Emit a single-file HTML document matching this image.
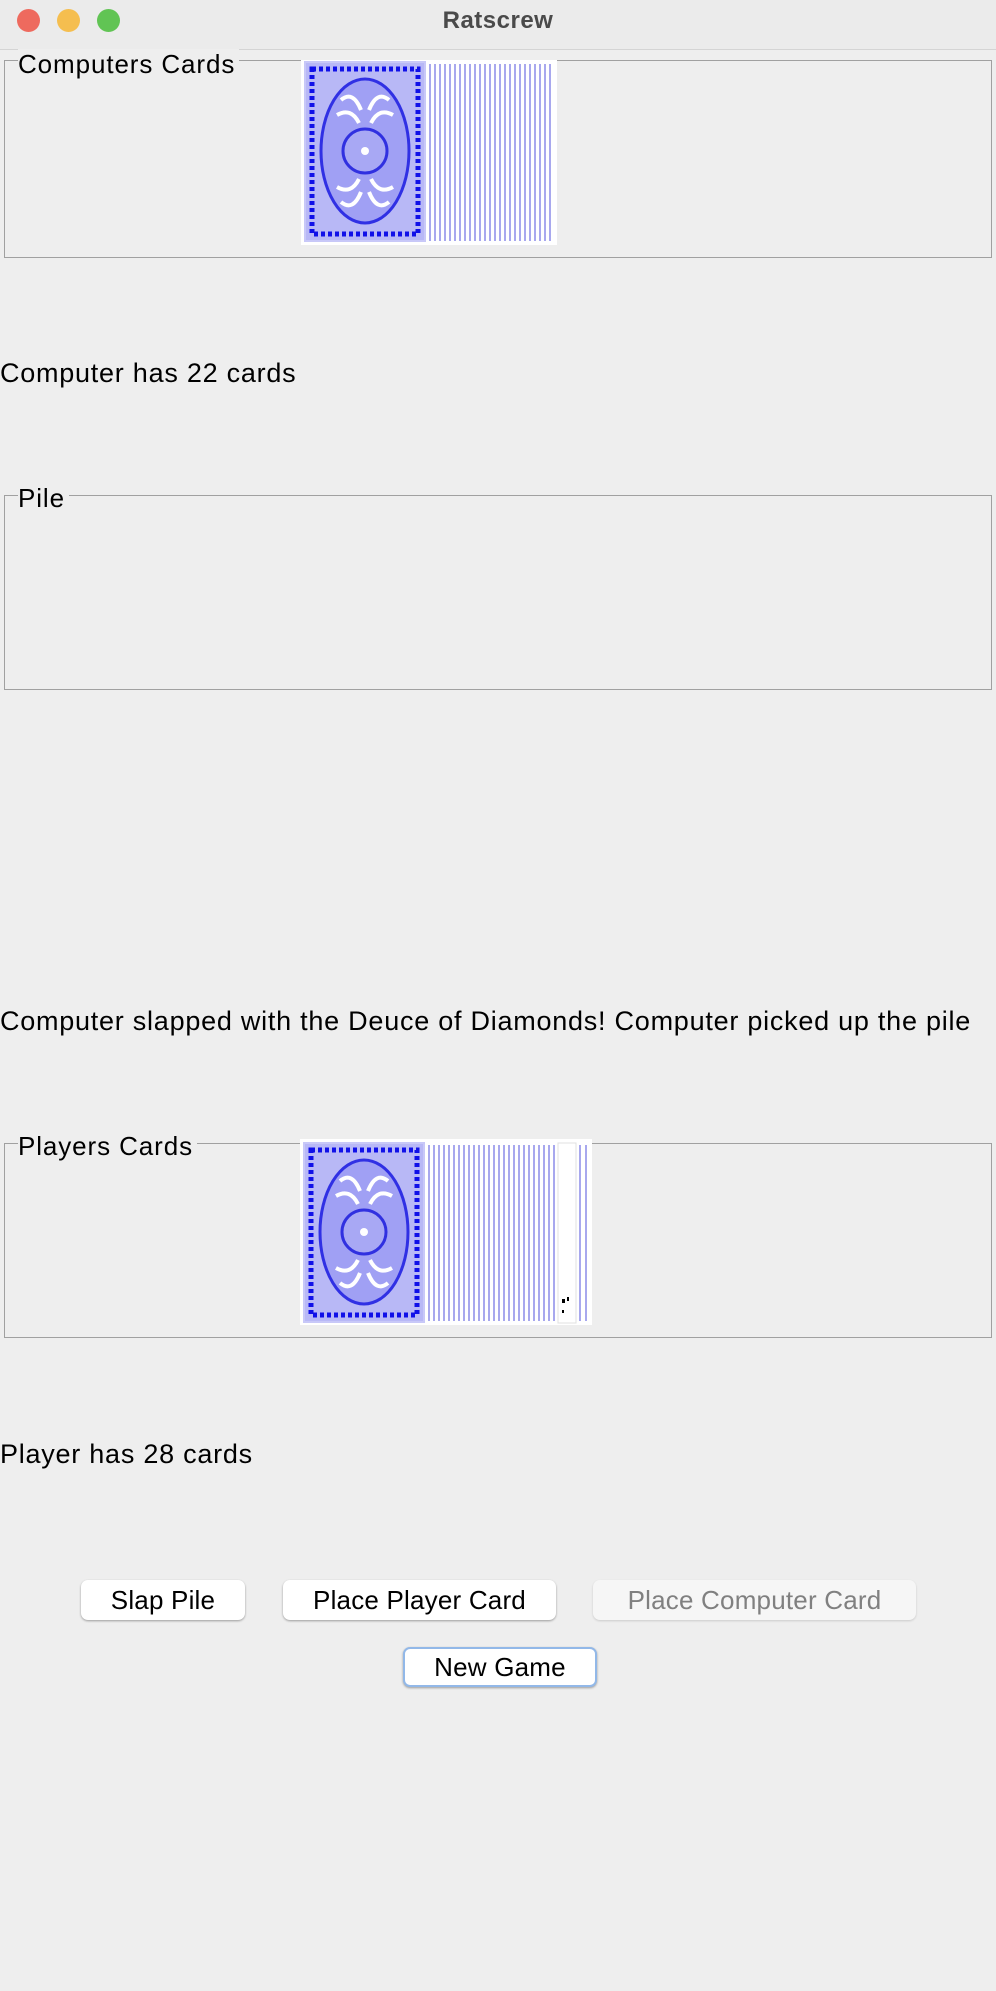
<!DOCTYPE html>
<html><head><meta charset="utf-8"><style>
*{margin:0;padding:0;box-sizing:border-box}
body{width:996px;height:1991px;background:#eeeeee;font-family:"Liberation Sans",sans-serif;position:relative;overflow:hidden;color:#000}
.tb{position:absolute;left:0;top:0;width:996px;height:50px;background:#ebebeb;border-bottom:1px solid #d4d4d4}
.dot{position:absolute;top:9px;width:23px;height:23px;border-radius:50%}
.title{position:absolute;top:7px;width:996px;text-align:center;font-weight:bold;font-size:24px;color:#4a4a4a;letter-spacing:0.5px}
.box{position:absolute;left:4px;width:988px;border:1.5px solid #a0a0a0}
.lbl{position:absolute;left:18px;font-size:26px;background:#eeeeee;padding:0 4px 0 0;line-height:30px;letter-spacing:0.9px}
.t{position:absolute;left:0;font-size:27px;line-height:30px;white-space:nowrap;letter-spacing:0.75px}
.btn{position:absolute;height:40px;background:#fff;border-radius:7px;box-shadow:0 1px 2px rgba(0,0,0,.35);font-size:26px;text-align:center;line-height:40px;letter-spacing:0.2px}
</style></head><body>
<div class="tb">
<div class="dot" style="left:17px;background:#ee6a5e"></div>
<div class="dot" style="left:57px;background:#f5be4f"></div>
<div class="dot" style="left:97px;background:#61c454"></div>
<div class="title">Ratscrew</div>
</div>

<div class="box" style="top:60px;height:198px"></div>
<div class="lbl" style="top:49px">Computers Cards</div>
<svg style="position:absolute;left:301px;top:60px" width="256" height="185">
<rect width="256" height="185" fill="#fff"/>
<g id="cb">
<rect x="4" y="2" width="120" height="179" fill="#b8b8f6" stroke="#c8c8f8" stroke-width="2"/>
<rect x="11" y="9" width="106" height="165" fill="none" stroke="#1010e8" stroke-width="5" stroke-dasharray="4 3"/>
<ellipse cx="64" cy="91" rx="44" ry="72" fill="#a0a0f4" stroke="#3030e4" stroke-width="3"/>
<circle cx="64" cy="91" r="22" fill="#a8a8f4" stroke="#3030e0" stroke-width="3"/>
<circle cx="64" cy="91" r="4" fill="#fff"/>
<path d="M40 40 q12 -10 20 10 M88 40 q-12 -10 -20 10 M40 142 q12 10 20 -10 M88 142 q-12 10 -20 -10 M36 55 q14 -8 22 8 M92 55 q-14 -8 -22 8 M36 127 q14 8 22 -8 M92 127 q-14 8 -22 -8" stroke="#fff" stroke-width="4" fill="none"/>
</g>
<g stroke="#a8a8ee" stroke-width="2">
<line x1="129" y1="4" x2="129" y2="181"/><line x1="134" y1="4" x2="134" y2="181"/><line x1="139" y1="4" x2="139" y2="181"/><line x1="144" y1="4" x2="144" y2="181"/><line x1="149" y1="4" x2="149" y2="181"/><line x1="154" y1="4" x2="154" y2="181"/><line x1="159" y1="4" x2="159" y2="181"/><line x1="164" y1="4" x2="164" y2="181"/><line x1="169" y1="4" x2="169" y2="181"/><line x1="174" y1="4" x2="174" y2="181"/><line x1="179" y1="4" x2="179" y2="181"/><line x1="184" y1="4" x2="184" y2="181"/><line x1="189" y1="4" x2="189" y2="181"/><line x1="194" y1="4" x2="194" y2="181"/><line x1="199" y1="4" x2="199" y2="181"/><line x1="204" y1="4" x2="204" y2="181"/><line x1="209" y1="4" x2="209" y2="181"/><line x1="214" y1="4" x2="214" y2="181"/><line x1="219" y1="4" x2="219" y2="181"/><line x1="224" y1="4" x2="224" y2="181"/><line x1="229" y1="4" x2="229" y2="181"/><line x1="234" y1="4" x2="234" y2="181"/><line x1="239" y1="4" x2="239" y2="181"/><line x1="244" y1="4" x2="244" y2="181"/><line x1="249" y1="4" x2="249" y2="181"/>
</g>
</svg>

<div class="t" style="top:358px">Computer has 22 cards</div>

<div class="box" style="top:495px;height:195px"></div>
<div class="lbl" style="top:483px">Pile</div>

<div class="t" style="top:1006px">Computer slapped with the Deuce of Diamonds! Computer picked up the pile</div>

<div class="box" style="top:1143px;height:195px"></div>
<div class="lbl" style="top:1131px">Players Cards</div>
<svg style="position:absolute;left:300px;top:1139px" width="292" height="186">
<rect width="292" height="186" fill="#fff"/>
<use href="#cb" x="0" y="2"/>
<g stroke="#a8a8ee" stroke-width="2">
<line x1="129" y1="6" x2="129" y2="182"/><line x1="134" y1="6" x2="134" y2="182"/><line x1="139" y1="6" x2="139" y2="182"/><line x1="144" y1="6" x2="144" y2="182"/><line x1="149" y1="6" x2="149" y2="182"/><line x1="154" y1="6" x2="154" y2="182"/><line x1="159" y1="6" x2="159" y2="182"/><line x1="164" y1="6" x2="164" y2="182"/><line x1="169" y1="6" x2="169" y2="182"/><line x1="174" y1="6" x2="174" y2="182"/><line x1="179" y1="6" x2="179" y2="182"/><line x1="184" y1="6" x2="184" y2="182"/><line x1="189" y1="6" x2="189" y2="182"/><line x1="194" y1="6" x2="194" y2="182"/><line x1="199" y1="6" x2="199" y2="182"/><line x1="204" y1="6" x2="204" y2="182"/><line x1="209" y1="6" x2="209" y2="182"/><line x1="214" y1="6" x2="214" y2="182"/><line x1="219" y1="6" x2="219" y2="182"/><line x1="224" y1="6" x2="224" y2="182"/><line x1="229" y1="6" x2="229" y2="182"/><line x1="234" y1="6" x2="234" y2="182"/><line x1="239" y1="6" x2="239" y2="182"/><line x1="244" y1="6" x2="244" y2="182"/><line x1="249" y1="6" x2="249" y2="182"/><line x1="254" y1="6" x2="254" y2="182"/><line x1="280" y1="6" x2="280" y2="182"/><line x1="286" y1="6" x2="286" y2="182"/>
</g>
<rect x="258" y="4" width="18" height="180" fill="#fff" stroke="#e0e0e0"/>
<rect x="262" y="160" width="3" height="4" fill="#000"/><rect x="267" y="158" width="2" height="4" fill="#000"/><rect x="262" y="171" width="2" height="3" fill="#000"/>
</svg>

<div class="t" style="top:1439px">Player has 28 cards</div>

<div class="btn" style="left:81px;top:1580px;width:164px">Slap Pile</div>
<div class="btn" style="left:283px;top:1580px;width:273px">Place Player Card</div>
<div class="btn" style="left:593px;top:1580px;width:323px;background:#f6f6f6;color:#808080;box-shadow:0 1px 2px rgba(0,0,0,.15)">Place Computer Card</div>
<div class="btn" style="left:403px;top:1647px;width:194px;border:2px solid #92b8e8;line-height:36px">New Game</div>
</body></html>
